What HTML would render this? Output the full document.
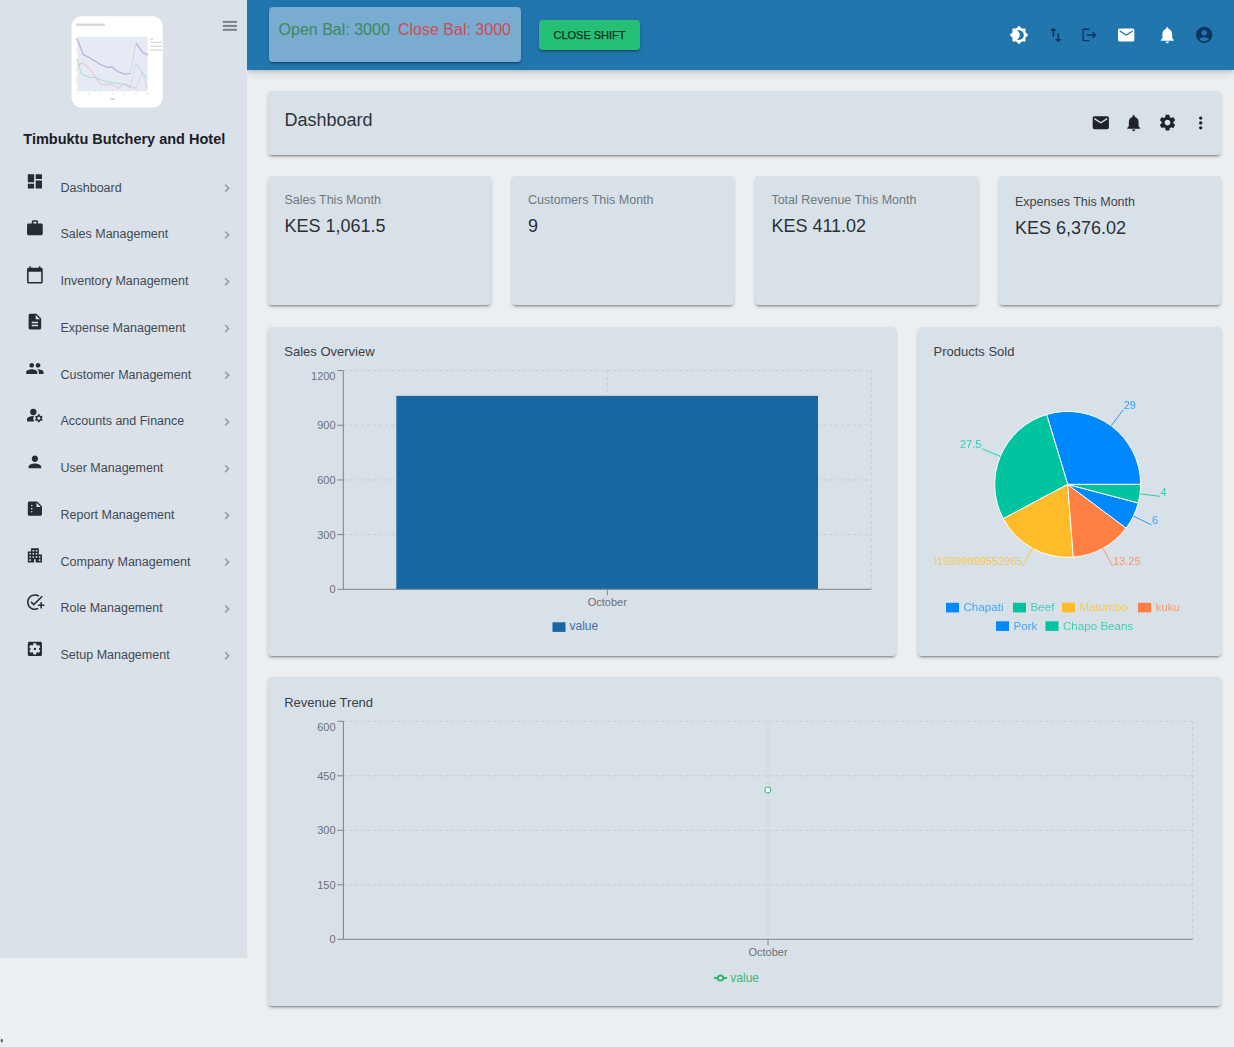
<!DOCTYPE html>
<html><head><meta charset="utf-8">
<style>
html,body{margin:0;padding:0;}
body{width:1234px;height:1047px;overflow:hidden;background:#ebeff2;position:relative;font-family:"Liberation Sans", sans-serif;}
.abs{position:absolute;}
#side{left:0;top:0;width:247px;height:958px;background:#dae1e8;}
#hdr{left:247px;top:0;width:987px;height:70px;background:#2176ae;box-shadow:0 2px 4px -1px rgba(0,0,0,0.16),0 4px 8px 0 rgba(0,0,0,0.10);}
#bal{left:269px;top:7px;width:252px;height:55px;background:#7aabd0;border-radius:4px;box-shadow:0 3px 1px -2px rgba(0,0,0,0.2),0 2px 2px 0 rgba(0,0,0,0.14),0 1px 5px 0 rgba(0,0,0,0.12);}
#btn{left:539px;top:20px;width:101px;height:30px;background:#25c073;border-radius:4px;box-shadow:0 3px 1px -2px rgba(0,0,0,0.2),0 2px 2px 0 rgba(0,0,0,0.14),0 1px 5px 0 rgba(0,0,0,0.12);}
.card{position:absolute;background:#d9e1e8;border-radius:4px;box-shadow:0 3px 1px -2px rgba(0,0,0,0.2),0 2px 2px 0 rgba(0,0,0,0.14),0 2px 4px 0 rgba(0,0,0,0.10);}
svg{position:absolute;left:0;top:0;}
svg text{font-family:"Liberation Sans", sans-serif;}
</style></head><body>
<div class="abs" id="hdr"></div>
<div class="abs" id="side"></div>
<div class="abs" id="bal"></div>
<div class="abs" id="btn"></div>
<div class="card" style="left:268px;top:91px;width:953px;height:64px"></div>
<div class="card" style="left:268px;top:176px;width:222.5px;height:129px"></div>
<div class="card" style="left:511.5px;top:176px;width:222.5px;height:129px"></div>
<div class="card" style="left:755px;top:176px;width:222.5px;height:129px"></div>
<div class="card" style="left:998.5px;top:176px;width:222.5px;height:129px"></div>
<div class="card" style="left:268px;top:327px;width:628px;height:329px"></div>
<div class="card" style="left:918px;top:327px;width:303px;height:329px"></div>
<div class="card" style="left:268px;top:677px;width:953px;height:329px"></div>
<svg width="1234" height="1047" viewBox="0 0 1234 1047">
<defs><filter id="lb" x="-10%" y="-10%" width="120%" height="120%"><feGaussianBlur stdDeviation="0.35"/></filter></defs>
<rect x="71.5" y="16.3" width="91.3" height="91.3" rx="10" fill="#ffffff"/>
<g filter="url(#lb)">
<rect x="77.3" y="36.6" width="70.4" height="54.8" fill="#e6eaf4"/>
<rect x="76" y="23.6" width="29" height="2.2" fill="#d4d6db"/>
<polyline points="77.3,39.0 83.3,54.9 87.8,56.8 101.4,65.0 107.4,67.3 111.9,66.9 118.0,71.8 124.8,74.1 130.0,73.7" fill="none" stroke="#b0b1e0" stroke-width="1.2" stroke-linejoin="round" />
<polyline points="130.0,73.7 136.0,43.2" fill="none" stroke="#b8b8c8" stroke-width="0.7" stroke-linejoin="round" stroke-dasharray="1.5 1"/>
<polyline points="136.0,43.2 142.8,52.6 147.7,54.9" fill="none" stroke="#b0b1e0" stroke-width="1.2" stroke-linejoin="round" />
<polyline points="77.3,65.4 82.5,62.8 89.3,68.4 100.6,84.3 106.7,84.3 112.7,84.3 118.3,88.4 124.0,83.9 130.0,86.1 136.0,88.4" fill="none" stroke="#ebbcc6" stroke-width="1.0" stroke-linejoin="round" />
<polyline points="136.0,88.4 142.0,72.2 147.4,88.8" fill="none" stroke="#c8b8c0" stroke-width="0.7" stroke-linejoin="round" stroke-dasharray="1.5 1"/>
<polyline points="77.3,60.1 81.8,74.5 90.1,77.5 94.6,77.5 101.4,80.1 108.2,82.0 114.2,82.8 124.8,84.3 130.0,88.0" fill="none" stroke="#a6dfd1" stroke-width="1.0" stroke-linejoin="round" />
<polyline points="130.0,88.0 136.0,63.2" fill="none" stroke="#b0c8c0" stroke-width="0.7" stroke-linejoin="round" stroke-dasharray="1.5 1"/>
<polyline points="136.0,63.2 142.0,72.2 147.4,79.0" fill="none" stroke="#a6dfd1" stroke-width="1.0" stroke-linejoin="round" />
<rect x="75.8" y="38.4" width="1.2" height="1.2" fill="#c8cbd0"/>
<rect x="75.8" y="49.0" width="1.2" height="1.2" fill="#c8cbd0"/>
<rect x="75.8" y="59.2" width="1.2" height="1.2" fill="#c8cbd0"/>
<rect x="75.8" y="69.4" width="1.2" height="1.2" fill="#c8cbd0"/>
<rect x="75.8" y="79.4" width="1.2" height="1.2" fill="#c8cbd0"/>
<rect x="76.8" y="93" width="0.9" height="1.3" fill="#c8cbd0"/>
<rect x="88.8" y="93" width="0.9" height="1.3" fill="#c8cbd0"/>
<rect x="100.5" y="93" width="0.9" height="1.3" fill="#c8cbd0"/>
<rect x="112.2" y="93" width="0.9" height="1.3" fill="#c8cbd0"/>
<rect x="124.0" y="93" width="0.9" height="1.3" fill="#c8cbd0"/>
<rect x="135.6" y="93" width="0.9" height="1.3" fill="#c8cbd0"/>
<rect x="147.0" y="93" width="0.9" height="1.3" fill="#c8cbd0"/>
<rect x="110" y="98.3" width="5" height="1.4" fill="#cdd0d5"/>
<rect x="150" y="38.5" width="3" height="1.3" fill="#cdd0d5"/>
<rect x="150" y="41.8" width="12" height="1.3" fill="#d6d8dc"/>
<rect x="150" y="45.6" width="12" height="1.3" fill="#d6d8dc"/>
<rect x="150" y="49.4" width="12" height="1.3" fill="#d6d8dc"/>
</g>
<rect x="222.8" y="20.9" width="14.1" height="2" fill="#7b8189"/>
<rect x="222.8" y="24.9" width="14.1" height="2" fill="#7b8189"/>
<rect x="222.8" y="28.8" width="14.1" height="2" fill="#7b8189"/>
<text x="23.30" y="144.30" font-size="14.5" fill="#1c2026" text-anchor="start" font-weight="bold" >Timbuktu Butchery and Hotel</text>
<path transform="translate(25.47 171.97) scale(0.7854)" d="M3 13h8V3H3zm0 8h8v-6H3zm10 0h8V11h-8zm0-18v6h8V3z" fill="#262c34" />
<text x="60.50" y="191.50" font-size="12.5" fill="#414a55" text-anchor="start" font-weight="normal" >Dashboard</text>
<path transform="translate(219.50 180.70) scale(0.6250)" d="M10 6 8.59 7.41 13.17 12l-4.58 4.59L10 18l6-6z" fill="#959ba3" stroke="#959ba3" stroke-width="0.7"/>
<path transform="translate(25.47 218.72) scale(0.7854)" d="M20 6h-4V4c0-1.11-.89-2-2-2h-4c-1.11 0-2 .89-2 2v2H4c-1.11 0-1.99.89-1.99 2L2 19c0 1.11.89 2 2 2h16c1.11 0 2-.89 2-2V8c0-1.11-.89-2-2-2m-6 0h-4V4h4z" fill="#262c34" />
<text x="60.50" y="238.25" font-size="12.5" fill="#414a55" text-anchor="start" font-weight="normal" >Sales Management</text>
<path transform="translate(219.50 227.45) scale(0.6250)" d="M10 6 8.59 7.41 13.17 12l-4.58 4.59L10 18l6-6z" fill="#959ba3" stroke="#959ba3" stroke-width="0.7"/>
<path transform="translate(25.47 265.47) scale(0.7854)" d="M20 3h-1V1h-2v2H7V1H5v2H4c-1.1 0-2 .9-2 2v16c0 1.1.9 2 2 2h16c1.1 0 2-.9 2-2V5c0-1.1-.9-2-2-2m0 18H4V8h16z" fill="#262c34" />
<text x="60.50" y="285.00" font-size="12.5" fill="#414a55" text-anchor="start" font-weight="normal" >Inventory Management</text>
<path transform="translate(219.50 274.20) scale(0.6250)" d="M10 6 8.59 7.41 13.17 12l-4.58 4.59L10 18l6-6z" fill="#959ba3" stroke="#959ba3" stroke-width="0.7"/>
<path transform="translate(25.47 312.22) scale(0.7854)" d="M14 2H6c-1.1 0-1.99.9-1.99 2L4 20c0 1.1.89 2 1.99 2H18c1.1 0 2-.9 2-2V8zm2 16H8v-2h8zm0-4H8v-2h8zm-3-5V3.5L18.5 9z" fill="#262c34" />
<text x="60.50" y="331.75" font-size="12.5" fill="#414a55" text-anchor="start" font-weight="normal" >Expense Management</text>
<path transform="translate(219.50 320.95) scale(0.6250)" d="M10 6 8.59 7.41 13.17 12l-4.58 4.59L10 18l6-6z" fill="#959ba3" stroke="#959ba3" stroke-width="0.7"/>
<path transform="translate(25.47 358.97) scale(0.7854)" d="M16 11c1.66 0 2.99-1.34 2.99-3S17.66 5 16 5s-3 1.34-3 3 1.34 3 3 3m-8 0c1.66 0 2.99-1.34 2.99-3S9.66 5 8 5 5 6.34 5 8s1.34 3 3 3m0 2c-2.33 0-7 1.17-7 3.5V19h14v-2.5c0-2.33-4.67-3.5-7-3.5m8 0c-.29 0-.62.02-.97.05 1.16.84 1.97 1.97 1.97 3.45V19h6v-2.5c0-2.33-4.67-3.5-7-3.5" fill="#262c34" />
<text x="60.50" y="378.50" font-size="12.5" fill="#414a55" text-anchor="start" font-weight="normal" >Customer Management</text>
<path transform="translate(219.50 367.70) scale(0.6250)" d="M10 6 8.59 7.41 13.17 12l-4.58 4.59L10 18l6-6z" fill="#959ba3" stroke="#959ba3" stroke-width="0.7"/>
<path transform="translate(25.47 405.72) scale(0.7854)" d="M10 8m-4 0a4 4 0 1 0 8 0a4 4 0 1 0-8 0M10.67 13.02c-.22-.01-.44-.02-.67-.02-2.42 0-4.68.67-6.61 1.82-.88.52-1.39 1.5-1.39 2.53V20h9.26c-.79-1.13-1.26-2.51-1.26-4 0-1.07.25-2.07.67-2.98M20.75 16c0-.22-.03-.42-.06-.63l1.14-1.01-1-1.73-1.45.49c-.32-.27-.68-.48-1.08-.63L18 11h-2l-.3 1.49c-.4.15-.76.36-1.08.63l-1.45-.49-1 1.730 1.14 1.01c-.03.21-.06.41-.06.63s.03.42.06.63l-1.14 1.01 1 1.73 1.45-.49c.32.27.68.48 1.08.63L16 21h2l.3-1.49c.4-.15.76-.36 1.08-.63l1.45.49 1-1.73-1.14-1.01c.03-.21.06-.41.06-.63M17 18c-1.1 0-2-.9-2-2s.9-2 2-2 2 .9 2 2-.9 2-2 2" fill="#262c34" />
<text x="60.50" y="425.25" font-size="12.5" fill="#414a55" text-anchor="start" font-weight="normal" >Accounts and Finance</text>
<path transform="translate(219.50 414.45) scale(0.6250)" d="M10 6 8.59 7.41 13.17 12l-4.58 4.59L10 18l6-6z" fill="#959ba3" stroke="#959ba3" stroke-width="0.7"/>
<path transform="translate(25.47 452.47) scale(0.7854)" d="M12 12c2.21 0 4-1.79 4-4s-1.79-4-4-4-4 1.79-4 4 1.79 4 4 4m0 2c-2.67 0-8 1.34-8 4v2h16v-2c0-2.66-5.33-4-8-4" fill="#262c34" />
<text x="60.50" y="472.00" font-size="12.5" fill="#414a55" text-anchor="start" font-weight="normal" >User Management</text>
<path transform="translate(219.50 461.20) scale(0.6250)" d="M10 6 8.59 7.41 13.17 12l-4.58 4.59L10 18l6-6z" fill="#959ba3" stroke="#959ba3" stroke-width="0.7"/>
<path transform="translate(25.47 499.22) scale(0.7854)" d="M15 3H5c-1.1 0-1.99.9-1.99 2L3 19c0 1.1.89 2 1.99 2H19c1.1 0 2-.9 2-2V9zM8 17c-.55 0-1-.45-1-1s.45-1 1-1 1 .45 1 1-.45 1-1 1m0-4c-.55 0-1-.45-1-1s.45-1 1-1 1 .45 1 1-.45 1-1 1m0-4c-.55 0-1-.45-1-1s.45-1 1-1 1 .45 1 1-.45 1-1 1m6 1V4.5l5.5 5.5z" fill="#262c34" />
<text x="60.50" y="518.75" font-size="12.5" fill="#414a55" text-anchor="start" font-weight="normal" >Report Management</text>
<path transform="translate(219.50 507.95) scale(0.6250)" d="M10 6 8.59 7.41 13.17 12l-4.58 4.59L10 18l6-6z" fill="#959ba3" stroke="#959ba3" stroke-width="0.7"/>
<path transform="translate(25.47 545.98) scale(0.7854)" d="M17 11V3H7v4H3v14h8v-4h2v4h8V11zM7 19H5v-2h2zm0-4H5v-2h2zm0-4H5V9h2zm4 4H9v-2h2zm0-4H9V9h2zm0-4H9V5h2zm4 8h-2v-2h2zm0-4h-2V9h2zm0-4h-2V5h2zm4 12h-2v-2h2zm0-4h-2v-2h2z" fill="#262c34" />
<text x="60.50" y="565.50" font-size="12.5" fill="#414a55" text-anchor="start" font-weight="normal" >Company Management</text>
<path transform="translate(219.50 554.70) scale(0.6250)" d="M10 6 8.59 7.41 13.17 12l-4.58 4.59L10 18l6-6z" fill="#959ba3" stroke="#959ba3" stroke-width="0.7"/>
<path transform="translate(25.47 592.73) scale(0.7854)" d="M22 5.18 10.59 16.6l-4.24-4.24 1.41-1.41 2.83 2.83 10-10zM12 20c-4.41 0-8-3.59-8-8s3.59-8 8-8c1.57 0 3.04.46 4.28 1.25l1.45-1.45C16.1 2.67 14.13 2 12 2 6.48 2 2 6.48 2 12s4.48 10 10 10c1.73 0 3.36-.44 4.78-1.22l-1.5-1.5c-1 .46-2.12.72-3.28.72m7-5h-3v2h3v3h2v-3h3v-2h-3v-3h-2z" fill="#262c34" />
<text x="60.50" y="612.25" font-size="12.5" fill="#414a55" text-anchor="start" font-weight="normal" >Role Management</text>
<path transform="translate(219.50 601.45) scale(0.6250)" d="M10 6 8.59 7.41 13.17 12l-4.58 4.59L10 18l6-6z" fill="#959ba3" stroke="#959ba3" stroke-width="0.7"/>
<path transform="translate(25.47 639.48) scale(0.7854)" d="M10.5 12a1.5 1.5 0 1 0 3 0 1.5 1.5 0 1 0-3 0M19 3H5c-1.11 0-2 .9-2 2v14c0 1.1.89 2 2 2h14c1.11 0 2-.9 2-2V5c0-1.1-.89-2-2-2m-1.75 9c0 .24-.02.47-.05.71l1.52 1.19c.13.11.17.3.08.45l-1.44 2.49c-.09.15-.27.22-.44.15l-1.790-.72c-.37.29-.78.53-1.22.71l-.27 1.91c-.03.17-.18.3-.36.3h-2.88c-.18 0-.33-.13-.36-.3l-.27-1.91c-.44-.18-.85-.42-1.22-.71l-1.79.72c-.17.06-.35 0-.44-.15l-1.44-2.49c-.09-.15-.05-.34.08-.45l1.52-1.19c-.03-.23-.05-.47-.05-.71s.02-.47.05-.71l-1.52-1.19c-.13-.11-.17-.3-.08-.45l1.44-2.49c.09-.15.27-.22.44-.15l1.79.72c.37-.29.78-.53 1.22-.71l.27-1.91c.03-.17.18-.3.36-.3h2.88c.18 0 .33.13.36.3l.27 1.91c.44.18.85.42 1.22.71l1.79-.72c.17-.06.35 0 .44.15l1.44 2.49c.09.15.05.34-.08.45l-1.52 1.19c.03.24.05.47.05.71" fill="#262c34" />
<text x="60.50" y="659.00" font-size="12.5" fill="#414a55" text-anchor="start" font-weight="normal" >Setup Management</text>
<path transform="translate(219.50 648.20) scale(0.6250)" d="M10 6 8.59 7.41 13.17 12l-4.58 4.59L10 18l6-6z" fill="#959ba3" stroke="#959ba3" stroke-width="0.7"/>
<rect x="246" y="0" width="1" height="70" fill="#c9e3f5" opacity="0.8"/>
<text x="278.60" y="34.70" font-size="16" fill="#3b8a5c" text-anchor="start" font-weight="normal" >Open Bal: 3000</text>
<text x="398.00" y="34.70" font-size="16" fill="#d24a55" text-anchor="start" font-weight="normal" >Close Bal: 3000</text>
<text x="589.50" y="38.70" font-size="11" fill="#10301f" text-anchor="middle" font-weight="normal" stroke="#10301f" stroke-width="0.25">CLOSE SHIFT</text>
<path transform="translate(1009.25 25.25) scale(0.8125)" d="M20 8.69V4h-4.69L12 .69 8.69 4H4v4.69L.69 12 4 15.31V20h4.69L12 23.31 15.31 20H20v-4.69L23.31 12zM12 18c-.89 0-1.74-.2-2.5-.55C11.56 16.5 13 14.42 13 12s-1.44-4.5-3.5-5.45C10.26 6.2 11.11 6 12 6c3.310 0 6 2.69 6 6s-2.69 6-6 6" fill="#ffffff" />
<path transform="translate(1046.05 25.25) scale(0.8125)" d="M16 17.01V10h-2v7.01h-3L15 21l4-3.99zM9 3 5 6.99h3V14h2V6.99h3z" fill="#0b355c" />
<path transform="translate(1081.00 26.50) scale(0.7083)" d="m17 7-1.41 1.41L18.17 11H8v2h10.17l-2.58 2.58L17 17l5-5zM4 5h8V3H4c-1.1 0-2 .9-2 2v14c0 1.1.9 2 2 2h8v-2H4z" fill="#0b355c" />
<path transform="translate(1116.45 25.25) scale(0.8125)" d="M20 4H4c-1.1 0-1.99.9-1.99 2L2 18c0 1.1.9 2 2 2h16c1.1 0 2-.9 2-2V6c0-1.1-.9-2-2-2m0 4-8 5-8-5V6l8 5 8-5z" fill="#ffffff" />
<path transform="translate(1157.55 25.25) scale(0.8125)" d="M12 22c1.1 0 2-.9 2-2h-4c0 1.1.89 2 2 2m6-6v-5c0-3.07-1.64-5.64-4.5-6.32V4c0-.83-.67-1.5-1.5-1.5s-1.5.67-1.5 1.5v.68C7.63 5.36 6 7.92 6 11v5l-2 2v1h16v-1z" fill="#ffffff" />
<path transform="translate(1194.45 25.05) scale(0.8125)" d="M12 2C6.48 2 2 6.48 2 12s4.48 10 10 10 10-4.48 10-10S17.52 2 12 2m0 4c1.93 0 3.5 1.57 3.5 3.5S13.93 13 12 13s-3.5-1.57-3.5-3.5S10.07 6 12 6m0 14c-2.03 0-4.43-.82-6.140-2.88C7.55 15.8 9.68 15 12 15s4.45.8 6.14 2.12C16.43 19.18 14.03 20 12 20" fill="#0b355c" />
<text x="284.50" y="125.60" font-size="18" fill="#2b323a" text-anchor="start" font-weight="normal" >Dashboard</text>
<path transform="translate(1091.05 112.95) scale(0.8125)" d="M20 4H4c-1.1 0-1.99.9-1.99 2L2 18c0 1.1.9 2 2 2h16c1.1 0 2-.9 2-2V6c0-1.1-.9-2-2-2m0 4-8 5-8-5V6l8 5 8-5z" fill="#1f2328" />
<path transform="translate(1123.95 113.25) scale(0.8125)" d="M12 22c1.1 0 2-.9 2-2h-4c0 1.1.89 2 2 2m6-6v-5c0-3.07-1.64-5.64-4.5-6.32V4c0-.83-.67-1.5-1.5-1.5s-1.5.67-1.5 1.5v.68C7.63 5.36 6 7.92 6 11v5l-2 2v1h16v-1z" fill="#1f2328" />
<path transform="translate(1157.75 112.85) scale(0.8125)" d="M19.14 12.94c.04-.3.06-.61.06-.94 0-.32-.02-.64-.07-.94l2.03-1.58c.18-.14.23-.41.12-.61l-1.92-3.32c-.12-.22-.37-.29-.59-.22l-2.39.96c-.5-.38-1.03-.7-1.62-.94l-.36-2.54c-.04-.24-.24-.41-.48-.41h-3.84c-.24 0-.43.17-.47.41l-.36 2.54c-.59.24-1.13.57-1.62.94l-2.39-.96c-.22-.08-.47 0-.59.22L2.74 8.87c-.12.21-.08.47.12.61l2.03 1.58c-.05.3-.09.63-.09.94s.02.64.07.94l-2.03 1.58c-.18.14-.23.41-.12.61l1.92 3.32c.12.22.37.29.59.22l2.39-.96c.5.38 1.03.7 1.62.94l.36 2.54c.05.24.24.41.48.41h3.84c.24 0 .44-.17.47-.41l.36-2.54c.59-.24 1.13-.56 1.62-.94l2.39.96c.22.08.47 0 .59-.22l1.92-3.32c.12-.22.07-.47-.12-.61zM12 15.6c-1.98 0-3.6-1.62-3.6-3.6s1.62-3.6 3.6-3.6 3.6 1.62 3.6 3.6-1.62 3.6-3.6 3.6" fill="#1f2328" />
<path transform="translate(1190.95 113.15) scale(0.8125)" d="M12 8c1.1 0 2-.9 2-2s-.9-2-2-2-2 .9-2 2 .9 2 2 2m0 2c-1.1 0-2 .9-2 2s.9 2 2 2 2-.9 2-2-.9-2-2-2m0 6c-1.1 0-2 .9-2 2s.9 2 2 2 2-.9 2-2-.9-2-2-2" fill="#1f2328" />
<text x="284.50" y="204.00" font-size="12.5" fill="#6e7780" text-anchor="start" font-weight="normal" >Sales This Month</text>
<text x="284.50" y="231.50" font-size="18" fill="#2a3038" text-anchor="start" font-weight="normal" >KES 1,061.5</text>
<text x="528.00" y="204.00" font-size="12.5" fill="#6e7780" text-anchor="start" font-weight="normal" >Customers This Month</text>
<text x="528.00" y="231.50" font-size="18" fill="#2a3038" text-anchor="start" font-weight="normal" >9</text>
<text x="771.40" y="204.00" font-size="12.5" fill="#6e7780" text-anchor="start" font-weight="normal" >Total Revenue This Month</text>
<text x="771.40" y="231.50" font-size="18" fill="#2a3038" text-anchor="start" font-weight="normal" >KES 411.02</text>
<text x="1015.00" y="206.00" font-size="12.5" fill="#3d444c" text-anchor="start" font-weight="normal" >Expenses This Month</text>
<text x="1015.00" y="233.50" font-size="18" fill="#2a3038" text-anchor="start" font-weight="normal" >KES 6,376.02</text>
<text x="284.30" y="355.90" font-size="13" fill="#3a4048" text-anchor="start" font-weight="normal" >Sales Overview</text>
<line x1="343.3" y1="534.62" x2="871.3" y2="534.62" stroke="#c3cad1" stroke-dasharray="3 3"/>
<line x1="343.3" y1="479.95" x2="871.3" y2="479.95" stroke="#c3cad1" stroke-dasharray="3 3"/>
<line x1="343.3" y1="425.27" x2="871.3" y2="425.27" stroke="#c3cad1" stroke-dasharray="3 3"/>
<line x1="343.3" y1="370.60" x2="871.3" y2="370.60" stroke="#c3cad1" stroke-dasharray="3 3"/>
<line x1="607.3" y1="370.6" x2="607.3" y2="589.3" stroke="#c3cad1" stroke-dasharray="3 3"/>
<line x1="871.3" y1="370.6" x2="871.3" y2="589.3" stroke="#c3cad1" stroke-dasharray="3 3"/>
<rect x="396.3" y="395.84" width="421.7" height="193.46" fill="#1866a2"/>
<line x1="343.3" y1="370.6" x2="343.3" y2="589.3" stroke="#7d8288"/>
<line x1="343.3" y1="589.3" x2="871.3" y2="589.3" stroke="#7d8288"/>
<line x1="337.3" y1="589.30" x2="343.3" y2="589.30" stroke="#7d8288"/>
<text x="335.50" y="593.20" font-size="11" fill="#6b7078" text-anchor="end" font-weight="normal" >0</text>
<line x1="337.3" y1="534.62" x2="343.3" y2="534.62" stroke="#7d8288"/>
<text x="335.50" y="538.52" font-size="11" fill="#6b7078" text-anchor="end" font-weight="normal" >300</text>
<line x1="337.3" y1="479.95" x2="343.3" y2="479.95" stroke="#7d8288"/>
<text x="335.50" y="483.85" font-size="11" fill="#6b7078" text-anchor="end" font-weight="normal" >600</text>
<line x1="337.3" y1="425.27" x2="343.3" y2="425.27" stroke="#7d8288"/>
<text x="335.50" y="429.17" font-size="11" fill="#6b7078" text-anchor="end" font-weight="normal" >900</text>
<line x1="337.3" y1="370.60" x2="343.3" y2="370.60" stroke="#7d8288"/>
<text x="335.50" y="380.00" font-size="11" fill="#6b7078" text-anchor="end" font-weight="normal" >1200</text>
<line x1="607.3" y1="589.3" x2="607.3" y2="595.3" stroke="#7d8288"/>
<text x="607.30" y="605.80" font-size="11" fill="#6b7078" text-anchor="middle" font-weight="normal" >October</text>
<rect x="552.5" y="622.3" width="13" height="9.6" fill="#1866a2"/>
<text x="569.50" y="630.20" font-size="12" fill="#3f6fa3" text-anchor="start" font-weight="normal" >value</text>
<text x="933.50" y="355.90" font-size="13" fill="#3a4048" text-anchor="start" font-weight="normal" >Products Sold</text>
<defs><clipPath id="pc"><rect x="934" y="330" width="290" height="320"/></clipPath></defs>
<g clip-path="url(#pc)">
<path d="M1067.7,484.4 L1140.70,484.40 A73,73 0 0 0 1046.62,414.51 Z" fill="#0088FE" stroke="#ffffff" stroke-width="1"/>
<path d="M1067.7,484.4 L1046.62,414.51 A73,73 0 0 0 1003.27,518.72 Z" fill="#00C49F" stroke="#ffffff" stroke-width="1"/>
<path d="M1067.7,484.4 L1003.27,518.72 A73,73 0 0 0 1073.29,557.19 Z" fill="#FFBB28" stroke="#ffffff" stroke-width="1"/>
<path d="M1067.7,484.4 L1073.29,557.19 A73,73 0 0 0 1126.14,528.15 Z" fill="#FF8042" stroke="#ffffff" stroke-width="1"/>
<path d="M1067.7,484.4 L1126.14,528.15 A73,73 0 0 0 1138.30,502.96 Z" fill="#0088FE" stroke="#ffffff" stroke-width="1"/>
<path d="M1067.7,484.4 L1138.30,502.96 A73,73 0 0 0 1140.70,484.40 Z" fill="#00C49F" stroke="#ffffff" stroke-width="1"/>
<path d="M1111.23,425.80 L1123.16,409.75" stroke="#0088FE" fill="none" opacity="0.8"/>
<text x="1123.66" y="409.25" font-size="11" fill="#0088FE" text-anchor="start" font-weight="normal" opacity="0.75">29</text>
<path d="M1000.30,456.36 L981.84,448.68" stroke="#00C49F" fill="none" opacity="0.8"/>
<text x="981.34" y="448.18" font-size="11" fill="#00C49F" text-anchor="end" font-weight="normal" opacity="0.75">27.5</text>
<path d="M1032.55,548.38 L1022.92,565.91" stroke="#FFBB28" fill="none" opacity="0.8"/>
<text x="1022.42" y="565.41" font-size="11" fill="#FFBB28" text-anchor="end" font-weight="normal" opacity="0.75">18.019999999552965</text>
<path d="M1102.85,548.38 L1112.48,565.91" stroke="#FF8042" fill="none" opacity="0.8"/>
<text x="1112.98" y="565.41" font-size="11" fill="#FF8042" text-anchor="start" font-weight="normal" opacity="0.75">13.25</text>
<path d="M1133.44,516.14 L1151.45,524.84" stroke="#0088FE" fill="none" opacity="0.8"/>
<text x="1151.95" y="524.34" font-size="11" fill="#0088FE" text-anchor="start" font-weight="normal" opacity="0.75">6</text>
<path d="M1140.10,493.76 L1159.93,496.32" stroke="#00C49F" fill="none" opacity="0.8"/>
<text x="1160.43" y="495.82" font-size="11" fill="#00C49F" text-anchor="start" font-weight="normal" opacity="0.75">4</text>
</g>
<rect x="946" y="602.8" width="13" height="9.6" fill="#0088FE"/>
<text x="963.50" y="611.00" font-size="11.6" fill="#0088FE" text-anchor="start" font-weight="normal" opacity="0.7">Chapati</text>
<rect x="1013" y="602.8" width="13" height="9.6" fill="#00C49F"/>
<text x="1030.50" y="611.00" font-size="11.6" fill="#00C49F" text-anchor="start" font-weight="normal" opacity="0.7">Beef</text>
<rect x="1062" y="602.8" width="13" height="9.6" fill="#FFBB28"/>
<text x="1079.50" y="611.00" font-size="11.6" fill="#FFBB28" text-anchor="start" font-weight="normal" opacity="0.7">Matumbo</text>
<rect x="1138" y="602.8" width="13" height="9.6" fill="#FF8042"/>
<text x="1155.50" y="611.00" font-size="11.6" fill="#FF8042" text-anchor="start" font-weight="normal" opacity="0.7">kuku</text>
<rect x="996" y="621.3" width="13" height="9.6" fill="#0088FE"/>
<text x="1013.50" y="629.60" font-size="11.6" fill="#0088FE" text-anchor="start" font-weight="normal" opacity="0.7">Pork</text>
<rect x="1045.5" y="621.3" width="13" height="9.6" fill="#00C49F"/>
<text x="1063.00" y="629.60" font-size="11.6" fill="#00C49F" text-anchor="start" font-weight="normal" opacity="0.7">Chapo Beans</text>
<text x="284.20" y="707.00" font-size="13" fill="#3a4048" text-anchor="start" font-weight="normal" >Revenue Trend</text>
<line x1="343.4" y1="884.80" x2="1192.6" y2="884.80" stroke="#c3cad1" stroke-dasharray="3 3"/>
<line x1="343.4" y1="830.30" x2="1192.6" y2="830.30" stroke="#c3cad1" stroke-dasharray="3 3"/>
<line x1="343.4" y1="775.80" x2="1192.6" y2="775.80" stroke="#c3cad1" stroke-dasharray="3 3"/>
<line x1="343.4" y1="721.30" x2="1192.6" y2="721.30" stroke="#c3cad1" stroke-dasharray="3 3"/>
<line x1="768" y1="721.3" x2="768" y2="939.3" stroke="#c3cad1" stroke-dasharray="3 3"/>
<line x1="1192.6" y1="721.3" x2="1192.6" y2="939.3" stroke="#c3cad1" stroke-dasharray="3 3"/>
<line x1="343.4" y1="721.3" x2="343.4" y2="939.3" stroke="#7d8288"/>
<line x1="343.4" y1="939.3" x2="1192.6" y2="939.3" stroke="#7d8288"/>
<line x1="337.4" y1="939.30" x2="343.4" y2="939.30" stroke="#7d8288"/>
<text x="335.50" y="943.20" font-size="11" fill="#6b7078" text-anchor="end" font-weight="normal" >0</text>
<line x1="337.4" y1="884.80" x2="343.4" y2="884.80" stroke="#7d8288"/>
<text x="335.50" y="888.70" font-size="11" fill="#6b7078" text-anchor="end" font-weight="normal" >150</text>
<line x1="337.4" y1="830.30" x2="343.4" y2="830.30" stroke="#7d8288"/>
<text x="335.50" y="834.20" font-size="11" fill="#6b7078" text-anchor="end" font-weight="normal" >300</text>
<line x1="337.4" y1="775.80" x2="343.4" y2="775.80" stroke="#7d8288"/>
<text x="335.50" y="779.70" font-size="11" fill="#6b7078" text-anchor="end" font-weight="normal" >450</text>
<line x1="337.4" y1="721.30" x2="343.4" y2="721.30" stroke="#7d8288"/>
<text x="335.50" y="730.70" font-size="11" fill="#6b7078" text-anchor="end" font-weight="normal" >600</text>
<line x1="768" y1="939.3" x2="768" y2="945.3" stroke="#7d8288"/>
<text x="768.00" y="956.00" font-size="11" fill="#6b7078" text-anchor="middle" font-weight="normal" >October</text>
<circle cx="767.8" cy="789.96" r="3" fill="#ffffff" stroke="#2fb36f" stroke-width="1"/>
<line x1="714" y1="978" x2="727" y2="978" stroke="#2fb36f" stroke-width="2"/>
<circle cx="720.5" cy="978" r="2.6" fill="#ffffff" stroke="#2fb36f" stroke-width="2"/>
<text x="730.30" y="981.60" font-size="12" fill="#3bb87a" text-anchor="start" font-weight="normal" >value</text>
<ellipse cx="1.8" cy="1040.6" rx="1.1" ry="1.9" fill="#5a5f66"/>
</svg>
</body></html>
